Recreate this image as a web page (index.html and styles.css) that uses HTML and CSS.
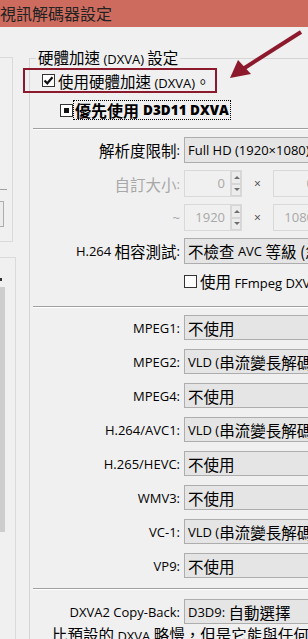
FILE: index.html
```html
<!DOCTYPE html>
<html lang="zh-Hant">
<head>
    <meta charset="UTF-8">
    <meta name="viewport" content="width=device-width, initial-scale=1.0">
    <title>視訊解碼器設定</title>
    <link rel="stylesheet" href="styles.css">
</head>
<body>
    <div class="titlebar"><span class="zh">視訊解碼器設定</span></div>

    <div class="content">
        <!-- panel izquierdo (cortado) -->
        <div class="side">
            <div class="side-box">
                <div class="side-sep"></div>
                <div class="side-btn"></div>
            </div>
            <div class="side-box2">
                <div class="side-mark"></div>
                <div class="side-scroll"></div>
            </div>
        </div>

        <fieldset class="group">
            <legend><span class="zh">硬體加速</span> (DXVA) <span class="zh">設定</span></legend>

            <div class="highlight">
                <span class="check checked">
                    <svg width="11" height="11" viewBox="0 0 11 11"><path d="M1.5 5.5 L4.3 8.3 L9.5 2.3" fill="none" stroke="#111" stroke-width="2.2"/></svg>
                </span>
                <span class="check-text"><span class="zh">使用硬體加速</span> (DXVA)<span class="zh">。</span></span>
            </div>

            <div class="option-row">
                <span class="check partial"></span>
                <span class="focus"><span class="zh">優先使用</span> D3D11 DXVA</span>
            </div>

            <div class="sep"></div>

            <div class="form form-top">
                <div class="label"><span class="zh">解析度限制</span>:</div>
                <div class="combo">Full HD (1920×1080)</div>

                <div class="label disabled"><span class="zh">自訂大小</span>:</div>
                <div class="spin-row">
                    <div class="spin">
                        <div class="spin-edit">0</div>
                        <div class="spin-btns"><span class="up"></span><span class="down"></span></div>
                    </div>
                    <span class="times">×</span>
                    <div class="spin">
                        <div class="spin-edit">0</div>
                        <div class="spin-btns"><span class="up"></span><span class="down"></span></div>
                    </div>
                </div>

                <div class="label disabled">~</div>
                <div class="spin-row">
                    <div class="spin">
                        <div class="spin-edit">1920</div>
                        <div class="spin-btns"><span class="up"></span><span class="down"></span></div>
                    </div>
                    <span class="times">×</span>
                    <div class="spin">
                        <div class="spin-edit">1080</div>
                        <div class="spin-btns"><span class="up"></span><span class="down"></span></div>
                    </div>
                </div>

                <div class="label">H.264&nbsp;<span class="zh">相容測試</span>:</div>
                <div class="combo"><span class="zh">不檢查</span>&nbsp;AVC&nbsp;<span class="zh">等級 (忽略)</span></div>

                <div></div>
                <div class="check-row">
                    <span class="check"></span>
                    <span class="check-text"><span class="zh">使用</span> FFmpeg DXVA</span>
                </div>
            </div>

            <div class="sep sep-codecs"></div>

            <div class="form form-codecs">
                <div class="label">MPEG1:</div>
                <div class="combo"><span class="zh">不使用</span></div>

                <div class="label">MPEG2:</div>
                <div class="combo">VLD (<span class="zh">串流變長解碼</span>)</div>

                <div class="label">MPEG4:</div>
                <div class="combo"><span class="zh">不使用</span></div>

                <div class="label">H.264/AVC1:</div>
                <div class="combo">VLD (<span class="zh">串流變長解碼</span>)</div>

                <div class="label">H.265/HEVC:</div>
                <div class="combo"><span class="zh">不使用</span></div>

                <div class="label">WMV3:</div>
                <div class="combo"><span class="zh">不使用</span></div>

                <div class="label">VC-1:</div>
                <div class="combo">VLD (<span class="zh">串流變長解碼</span>)</div>

                <div class="label">VP9:</div>
                <div class="combo"><span class="zh">不使用</span></div>
            </div>

            <div class="sep sep-copy"></div>

            <div class="form form-copy">
                <div class="label">DXVA2 Copy-Back:</div>
                <div class="combo">D3D9:&nbsp;<span class="zh">自動選擇</span></div>
            </div>

            <div class="desc"><span class="zh">比預設的</span> DXVA <span class="zh">略慢，但是它能與任何濾鏡相容</span></div>
        </fieldset>
    </div>

    <!-- flecha de anotación -->
    <svg class="arrow" width="308" height="100" viewBox="0 0 308 100">
        <line x1="301" y1="32" x2="243" y2="69" stroke="#8c1a2c" stroke-width="4"/>
        <polygon points="230,78 238,60 251,74" fill="#8c1a2c"/>
    </svg>
</body>
</html>
```

FILE: styles.css
```css
* {
    box-sizing: border-box;
}

html, body {
    overflow: hidden;
}

body {
    margin: 0;
    width: 308px;
    height: 639px;
    background-color: #f0f0f0;
    font-family: "Open Sans", "Noto Sans CJK TC", sans-serif;
    font-size: 13px;
    color: #000;
}

.zh {
    font-family: "Noto Sans CJK TC", sans-serif;
    font-size: 15.5px;
}

.titlebar {
    height: 27px;
    line-height: 27px;
    background-color: #cd6c5e;
    color: #222;
    white-space: nowrap;
}

.titlebar .zh {
    font-size: 16px;
}

.content {
    display: flex;
    padding-top: 21px;
}

/* panel izquierdo */
.side {
    width: 29px;
    flex-shrink: 0;
    padding-top: 9px;
}

.side-box {
    width: 13px;
    height: 185px;
    border: 1px solid #dadada;
    border-left: none;
}

.side-sep {
    width: 7px;
    height: 1px;
    margin-top: 131px;
    background: #a0a0a0;
}

.side-btn {
    width: 4px;
    height: 26px;
    margin-top: 11px;
    border: 1px solid #adadad;
    border-left: none;
    background: #ececec;
}

.side-box2 {
    width: 16px;
    height: 400px;
    margin-top: 15px;
    border-top: 1px solid #dadada;
    border-right: 1px solid #dadada;
}

.side-mark {
    width: 2px;
    height: 3px;
    margin-top: 20px;
    background: #333;
}

.side-scroll {
    width: 5px;
    height: 245px;
    margin-top: 6px;
    background: #cdcdcd;
}

/* grupo principal */
.group {
    flex: 1;
    min-width: 0;
    margin: 0;
    padding: 0 0 0 3px;
    border: 1px solid #d5d5d5;
    border-right: none;
    border-bottom: none;
}

.group legend {
    margin-left: 3px;
    padding: 0 2px;
    line-height: 18px;
    white-space: nowrap;
}

.highlight {
    display: flex;
    align-items: center;
    gap: 3px;
    width: 194px;
    height: 25px;
    margin-left: -10px;
    padding-left: 17px;
    border: 2px solid #8c1a2c;
    white-space: nowrap;
}

.check {
    position: relative;
    display: inline-flex;
    align-items: center;
    justify-content: center;
    width: 13px;
    height: 13px;
    border: 1px solid #333;
    background: #fff;
    flex-shrink: 0;
}

.check.partial::after {
    content: '';
    position: absolute;
    left: 3px;
    top: 3px;
    width: 5px;
    height: 5px;
    background: #111;
}

.check-text {
    white-space: nowrap;
}

.option-row {
    display: flex;
    align-items: center;
    height: 20px;
    margin-top: 7px;
    padding-left: 27px;
    white-space: nowrap;
}

.focus {
    display: flex;
    align-items: center;
    height: 20px;
    padding: 0 1px;
    border: 1px dotted #000;
    font-weight: 800;
    font-size: 13.5px;
}

.focus .zh {
    font-weight: 700;
    font-size: 16px;
    margin-right: 4px;
}

.sep {
    height: 2px;
    margin-top: 8px;
    border-top: 1px solid #a0a0a0;
    border-bottom: 1px solid #fff;
}

.sep-codecs {
    margin-top: 18px;
}

.sep-copy {
    margin-top: 10px;
}

.form {
    display: grid;
    grid-template-columns: 147px 170px;
    column-gap: 4px;
    row-gap: 7px;
    margin-top: 7px;
}

.form-codecs,
.form-copy {
    row-gap: 9px;
    margin-top: 7px;
}

.form-copy {
    margin-top: 9px;
}

.label {
    display: flex;
    align-items: center;
    justify-content: flex-end;
    white-space: nowrap;
}

.label.disabled {
    color: #a8a8a8;
}

.combo {
    display: flex;
    align-items: center;
    height: 25px;
    padding-left: 3px;
    border: 1px solid #adadad;
    background: #e5e5e5;
    white-space: nowrap;
    overflow: hidden;
}

.form-top .combo {
    height: 26px;
}

.spin-row {
    display: flex;
    align-items: center;
}

.spin {
    display: flex;
    height: 27px;
}

.spin-edit {
    width: 46px;
    padding-right: 5px;
    border: 1px solid #d9d9d9;
    border-right: none;
    color: #a8a8a8;
    text-align: right;
    line-height: 25px;
}

.spin-btns {
    display: flex;
    flex-direction: column;
    width: 12px;
    border: 1px solid #d9d9d9;
}

.spin-btns span {
    flex: 1;
    position: relative;
    background: #ececec;
    border: 1px solid #d6d6d6;
}

.spin-btns .up::after,
.spin-btns .down::after {
    content: '';
    position: absolute;
    left: 2px;
    top: 4px;
    border-left: 3px solid transparent;
    border-right: 3px solid transparent;
}

.spin-btns .up::after {
    border-bottom: 3px solid #6f6f6f;
}

.spin-btns .down::after {
    top: 3px;
    border-top: 3px solid #6f6f6f;
}

.times {
    width: 31px;
    text-align: center;
    color: #444;
    font-size: 12px;
}

.check-row {
    display: flex;
    align-items: center;
    gap: 3px;
    height: 14px;
    margin-top: 3px;
}

.desc {
    padding-left: 19px;
    margin-top: 1px;
    white-space: nowrap;
    line-height: 18px;
}

.arrow {
    position: absolute;
    top: 0;
    left: 0;
    pointer-events: none;
}
```
